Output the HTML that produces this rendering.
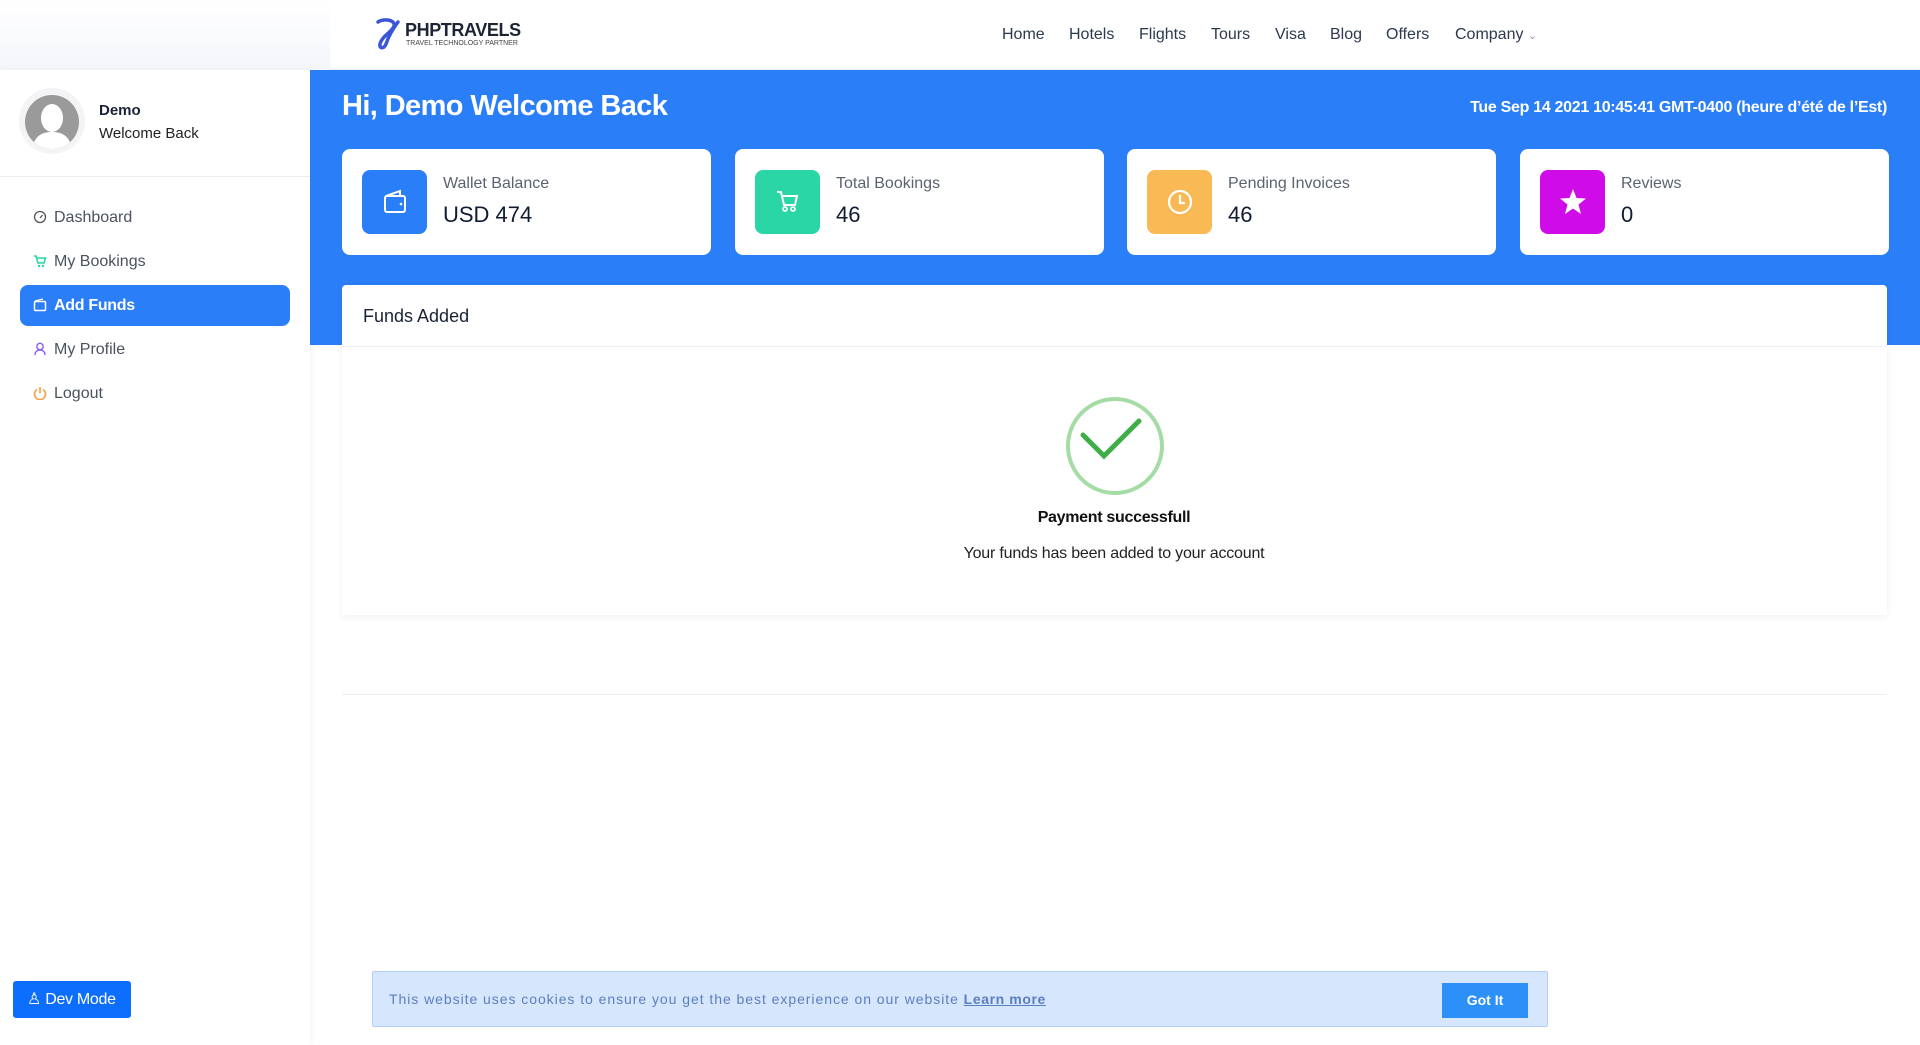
<!DOCTYPE html>
<html><head><meta charset="utf-8"><style>
*{margin:0;padding:0;box-sizing:border-box}
body{width:1920px;height:1045px;background:#fff;font-family:"Liberation Sans",sans-serif;position:relative;overflow:hidden;color:#1d2a3c}
.abs{position:absolute}
.hdr{left:0;top:0;width:1920px;height:70px;background:#fff;border-bottom:1px solid #eceef2}
.hdrl{left:0;top:0;width:330px;height:70px;background:linear-gradient(180deg,#fff,#f4f6fa)}
.nav{top:26px;font-size:16px;color:#2b3a50}
.side{left:0;top:70px;width:310px;height:975px;background:#fff;box-shadow:2px 0 6px rgba(0,0,0,.04)}
.band{left:310px;top:70px;width:1610px;height:275px;background:#2a7ef8}
.card{top:149px;width:369px;height:106px;background:#fff;border-radius:8px}
.ib{position:absolute;left:20px;top:21px;width:65px;height:64px;border-radius:8px;display:flex;align-items:center;justify-content:center}
.lbl{position:absolute;left:101px;top:26px;font-size:16px;color:#5b6270}
.val{position:absolute;left:101px;top:53px;font-size:22px;color:#0f1c33}
.menu{left:54px;font-size:16px;color:#4a5260}
.mi{left:33px}
</style></head><body>
<div class="abs hdr"></div><div class="abs hdrl"></div>
<svg class="abs" style="left:374px;top:18px" width="28" height="32" viewBox="0 0 28 32"><path d="M4 4 C10 0 22 2 20 8 C18 14 8 18 6 26 C5 31 10 31 12 26 C14 20 18 12 24 4" fill="none" stroke="#3b55d9" stroke-width="3.5" stroke-linecap="round"/></svg>
<div class="abs" style="left:405px;top:20px;font-size:18px;font-weight:bold;color:#1d2433;letter-spacing:-.4px">PHPTRAVELS</div>
<div class="abs" style="left:406px;top:40px;font-size:7px;color:#444">TRAVEL TECHNOLOGY PARTNER</div>
<div class="abs nav" style="left:1002px">Home</div>
<div class="abs nav" style="left:1069px">Hotels</div>
<div class="abs nav" style="left:1139px">Flights</div>
<div class="abs nav" style="left:1211px">Tours</div>
<div class="abs nav" style="left:1275px">Visa</div>
<div class="abs nav" style="left:1330px">Blog</div>
<div class="abs nav" style="left:1386px">Offers</div>
<div class="abs nav" style="left:1455px">Company <span style="font-size:11px;color:#999">&#8964;</span></div>

<div class="abs side"></div>
<div class="abs" style="left:19px;top:88px;width:66px;height:66px;border-radius:50%;background:#f4f4f6"></div>
<svg class="abs" style="left:24px;top:94px" width="56" height="56" viewBox="0 0 56 56"><defs><clipPath id="c"><circle cx="28" cy="28" r="27"/></clipPath></defs><circle cx="28" cy="28" r="27" fill="#9a9a9a"/><g clip-path="url(#c)" fill="#fff"><ellipse cx="28" cy="24" rx="11" ry="14"/><path d="M8 60 C8 42 18 38 28 38 C38 38 48 42 48 60Z"/></g></svg>
<div class="abs" style="left:99px;top:102px;font-size:15px;font-weight:bold;color:#1a2336">Demo</div>
<div class="abs" style="left:99px;top:125px;font-size:15px;color:#222">Welcome Back</div>
<div class="abs" style="left:0;top:176px;width:310px;height:1px;background:#eceef2"></div>
<div class="abs" style="left:20px;top:285px;width:270px;height:41px;background:#2a7ef8;border-radius:8px"></div>
<svg class="abs mi" style="top:210px" width="14" height="14" viewBox="0 0 14 14"><circle cx="7" cy="7" r="5.5" fill="none" stroke="#555" stroke-width="1.3"/><path d="M7 8 L9.5 5" stroke="#555" stroke-width="1.3"/></svg>
<div class="abs menu" style="top:209px">Dashboard</div>
<svg class="abs mi" style="top:254px" width="14" height="14" viewBox="0 0 14 14"><path d="M1 2h2l2 7h6l1.5-5H4" fill="none" stroke="#2ad6a6" stroke-width="1.6"/><circle cx="6" cy="12" r="1.2" fill="#2ad6a6"/><circle cx="10" cy="12" r="1.2" fill="#2ad6a6"/></svg>
<div class="abs menu" style="top:253px">My Bookings</div>
<svg class="abs mi" style="top:298px" width="14" height="14" viewBox="0 0 14 14"><rect x="1.5" y="3.5" width="11" height="9" rx="1" fill="none" stroke="#fff" stroke-width="1.5"/><path d="M2 3 L10 1" stroke="#fff" stroke-width="1.3"/></svg>
<div class="abs menu" style="top:297px;color:#fff;font-weight:bold;letter-spacing:-.3px">Add Funds</div>
<svg class="abs mi" style="top:342px" width="14" height="14" viewBox="0 0 14 14"><circle cx="7" cy="4.5" r="3.2" fill="none" stroke="#8b5cf6" stroke-width="1.4"/><path d="M2 13 C2 9 5 8 7 8 C9 8 12 9 12 13" fill="none" stroke="#8b5cf6" stroke-width="1.4"/></svg>
<div class="abs menu" style="top:341px">My Profile</div>
<svg class="abs mi" style="top:386px" width="14" height="14" viewBox="0 0 14 14"><path d="M4 3.5 A5.5 5.5 0 1 0 10 3.5" fill="none" stroke="#f59e42" stroke-width="1.6"/><path d="M7 1v6" stroke="#f59e42" stroke-width="1.6"/></svg>
<div class="abs menu" style="top:385px">Logout</div>
<div class="abs" style="left:13px;top:981px;width:118px;height:37px;background:#0d6efd;border-radius:3px;color:#fff;font-size:16px;line-height:37px;padding-left:14px;letter-spacing:-.3px">&#9817; Dev Mode</div>

<div class="abs band"></div>
<div class="abs" style="left:342px;top:90px;font-size:29px;font-weight:bold;color:#fff;letter-spacing:-.6px">Hi, Demo Welcome Back</div>
<div class="abs" style="right:33px;top:99px;font-size:16px;font-weight:bold;color:#fff;letter-spacing:-.3px">Tue Sep 14 2021 10:45:41 GMT-0400 (heure d’été de l’Est)</div>

<div class="abs card" style="left:342px"><div class="ib" style="background:#2a7ef8"><svg width="28" height="28" viewBox="0 0 28 28"><rect x="4" y="8" width="20" height="16" rx="2" fill="none" stroke="#fff" stroke-width="2"/><path d="M5 8 L19 3 V8" fill="none" stroke="#fff" stroke-width="2"/><circle cx="20" cy="16" r="1.3" fill="#fff"/></svg></div><div class="lbl">Wallet Balance</div><div class="val">USD 474</div></div>
<div class="abs card" style="left:735px"><div class="ib" style="background:#2ad6a6"><svg width="28" height="28" viewBox="0 0 28 28"><path d="M3 4h4l3 13h11l2-9H8" fill="none" stroke="#fff" stroke-width="2"/><circle cx="11" cy="21" r="2" fill="none" stroke="#fff" stroke-width="1.8"/><circle cx="19" cy="21" r="2" fill="none" stroke="#fff" stroke-width="1.8"/></svg></div><div class="lbl">Total Bookings</div><div class="val">46</div></div>
<div class="abs card" style="left:1127px"><div class="ib" style="background:#f9b955"><svg width="30" height="30" viewBox="0 0 30 30"><circle cx="15" cy="15" r="11" fill="none" stroke="#fff" stroke-width="2.2"/><path d="M15 8v8h5" fill="none" stroke="#fff" stroke-width="2.2"/></svg></div><div class="lbl">Pending Invoices</div><div class="val">46</div></div>
<div class="abs card" style="left:1520px"><div class="ib" style="background:#cf0ce7"><svg width="32" height="32" viewBox="0 0 32 32"><path d="M16 3 L19.5 12 L29 12.5 L21.5 18.5 L24 28 L16 22.5 L8 28 L10.5 18.5 L3 12.5 L12.5 12Z" fill="#fff"/></svg></div><div class="lbl">Reviews</div><div class="val">0</div></div>

<div class="abs" style="left:342px;top:285px;width:1545px;height:330px;background:#fff;border-radius:4px 4px 0 0;box-shadow:0 2px 8px rgba(0,0,0,.06)"></div>
<div class="abs" style="left:342px;top:346px;width:1545px;height:1px;background:#eef0f3"></div>
<div class="abs" style="left:363px;top:306px;font-size:18px;color:#1a2336">Funds Added</div>
<svg class="abs" style="left:1062px;top:393px" width="106" height="106" viewBox="0 0 106 106"><circle cx="53" cy="53" r="47" fill="none" stroke="#a5dca5" stroke-width="4"/><path d="M21 42 L42 63 L77 28" fill="none" stroke="#3fae49" stroke-width="5" stroke-linecap="round"/></svg>
<div class="abs" style="left:0;width:2228px;top:509px;text-align:center;font-size:16px;font-weight:bold;color:#111;letter-spacing:-.3px">Payment successfull</div>
<div class="abs" style="left:0;width:2228px;top:545px;text-align:center;font-size:16px;color:#222;letter-spacing:-.2px">Your funds has been added to your account</div>
<div class="abs" style="left:342px;top:694px;width:1545px;height:1px;background:#eceef2"></div>

<div class="abs" style="left:372px;top:971px;width:1176px;height:56px;background:#d6e6fd;border:1px solid #b3cff9;border-radius:2px"></div>
<div class="abs" style="left:389px;top:991px;font-size:14px;color:#5a7fc0;letter-spacing:.95px">This website uses cookies to ensure you get the best experience on our website <u style="font-weight:bold;letter-spacing:.6px">Learn more</u></div>
<div class="abs" style="left:1442px;top:983px;width:86px;height:35px;background:#2d8ff8;color:#fff;font-weight:bold;font-size:14px;text-align:center;line-height:35px">Got It</div>
</body></html>
